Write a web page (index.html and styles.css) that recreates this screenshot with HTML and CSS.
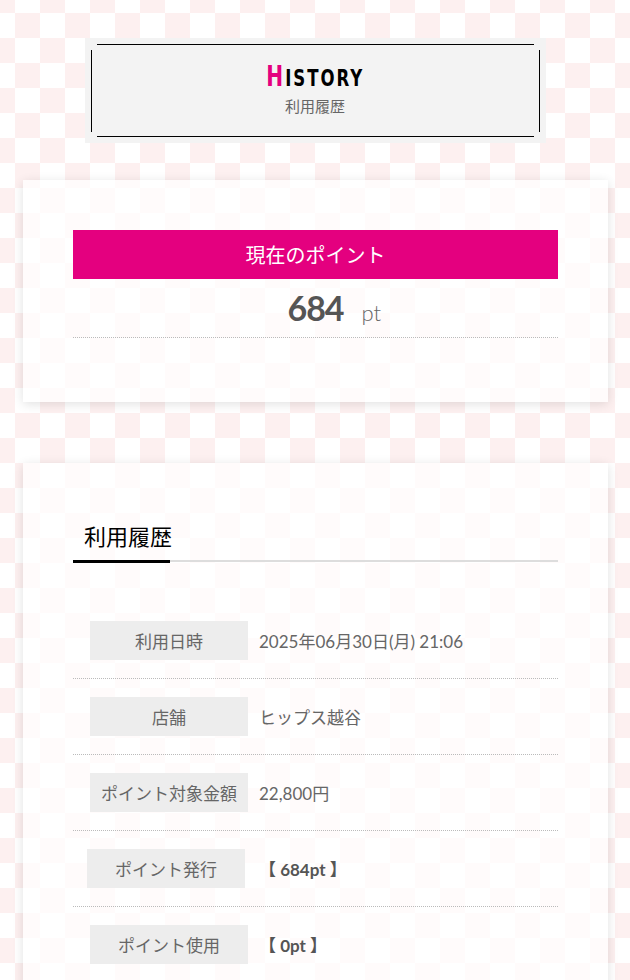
FILE: index.html
```html
<!DOCTYPE html>
<html lang="ja">

<head>
    <meta charset="UTF-8">
    <meta name="viewport" content="width=device-width, initial-scale=1.0">
    <title>利用履歴</title>
    <link rel="stylesheet" href="styles.css">
</head>

<body>
    <div id="page">
        <header class="ttl">
            <div class="ttl-h">
                <div class="ttl-v">
                    <h1 class="ttl-en"><span class="ttl-first">H</span>ISTORY</h1>
                    <p class="ttl-ja">利用履歴</p>
                </div>
            </div>
        </header>

        <section class="card">
            <h2 class="point-head">現在のポイント</h2>
            <p class="point-num"><span></span><strong>684</strong><span class="point-unit">pt</span></p>
        </section>

        <section class="card card-history">
            <div class="tab"><span class="tab-label">利用履歴</span></div>
            <dl class="rows">
                <div class="row">
                    <dt>利用日時</dt>
                    <dd>2025年06月30日(月) 21:06</dd>
                </div>
                <div class="row">
                    <dt>店舗</dt>
                    <dd>ヒップス越谷</dd>
                </div>
                <div class="row">
                    <dt>ポイント対象金額</dt>
                    <dd>22,800円</dd>
                </div>
                <div class="row row-shift">
                    <dt>ポイント発行</dt>
                    <dd class="val-pt">【 684pt 】</dd>
                </div>
                <div class="row">
                    <dt>ポイント使用</dt>
                    <dd class="val-pt">【 0pt 】</dd>
                </div>
            </dl>
        </section>
    </div>
</body>

</html>
```

FILE: styles.css
```css
html {
    background: #fff repeating-conic-gradient(#fff 0 25%, #fdf0f0 0 50%) -10px -12px / 50px 50px;
}

body {
    margin: 0;
    font-family: "Noto Sans CJK JP", sans-serif;
    color: #666;
}

#page {
    padding: 38px 0 40px;
}

/* title box */
.ttl {
    width: 449px;
    margin: 0 auto;
    padding: 6px;
    background: #f3f3f3;
}

.ttl-h {
    margin: 0 6px;
    border-top: 1px solid #000;
    border-bottom: 1px solid #000;
}

.ttl-v {
    margin: 5px -6px 4px;
    padding: 12px 0 16px;
    border-left: 1px solid #000;
    border-right: 1px solid #000;
    text-align: center;
}

.ttl-en {
    display: inline-block;
    margin: 0;
    font-family: "DejaVu Sans Condensed", "DejaVu Sans", sans-serif;
    font-weight: bold;
    font-size: 23px;
    line-height: 30px;
    letter-spacing: 2.5px;
    color: #000;
    transform: scaleX(0.8);
}

.ttl-first {
    font-size: 28px;
    color: #e4007f;
}

.ttl-ja {
    margin: 3px 0 0;
    font-size: 15px;
    line-height: 20px;
    color: #666;
}

/* cards */
.card {
    margin: 37px 22px 0 23px;
    padding: 50px 50px 64px;
    background: rgba(255, 255, 255, 0.7);
    box-shadow: 0 2px 10px rgba(0, 0, 0, 0.12);
}

.card-history {
    margin-top: 61px;
}

.point-head {
    margin: 0;
    background: #e4007f;
    color: #fff;
    font-weight: normal;
    font-size: 20px;
    line-height: 49px;
    text-align: center;
}

.point-num {
    display: grid;
    grid-template-columns: 1fr auto 1fr;
    align-items: baseline;
    margin: 0;
    height: 58px;
    border-bottom: 1px dotted #bbb;
    font-family: Lato, sans-serif;
    line-height: 58px;
}

.point-num strong {
    font-size: 34px;
    font-weight: bold;
    color: #555;
    letter-spacing: -1px;
}

.point-unit {
    padding-left: 18px;
    font-size: 22px;
    font-weight: 300;
    color: #666;
}

/* history */
.tab {
    display: flex;
    margin-top: 6px;
    border-bottom: 2px solid #ddd;
}

.tab-label {
    width: 86px;
    margin-bottom: -3px;
    padding: 0 0 9px 11px;
    border-bottom: 3px solid #000;
    font-size: 22px;
    line-height: 32px;
    color: #000;
    white-space: nowrap;
}

.rows {
    margin: 41px 0 0;
}

.row {
    display: flex;
    align-items: center;
    padding: 18px 0;
    border-bottom: 1px dotted #bbb;
}

.row dt {
    width: 158px;
    margin-left: 17px;
    background: #ededed;
    font-size: 17px;
    line-height: 39px;
    text-align: center;
    white-space: nowrap;
}

.row-shift dt {
    margin-left: 14px;
}

.row dd {
    margin-left: 11px;
    font-family: Lato, "Noto Sans CJK JP", sans-serif;
    font-size: 17px;
}

.row-shift dd {
    margin-left: 14px;
}

.val-pt {
    font-weight: bold;
    color: #555;
}
```
